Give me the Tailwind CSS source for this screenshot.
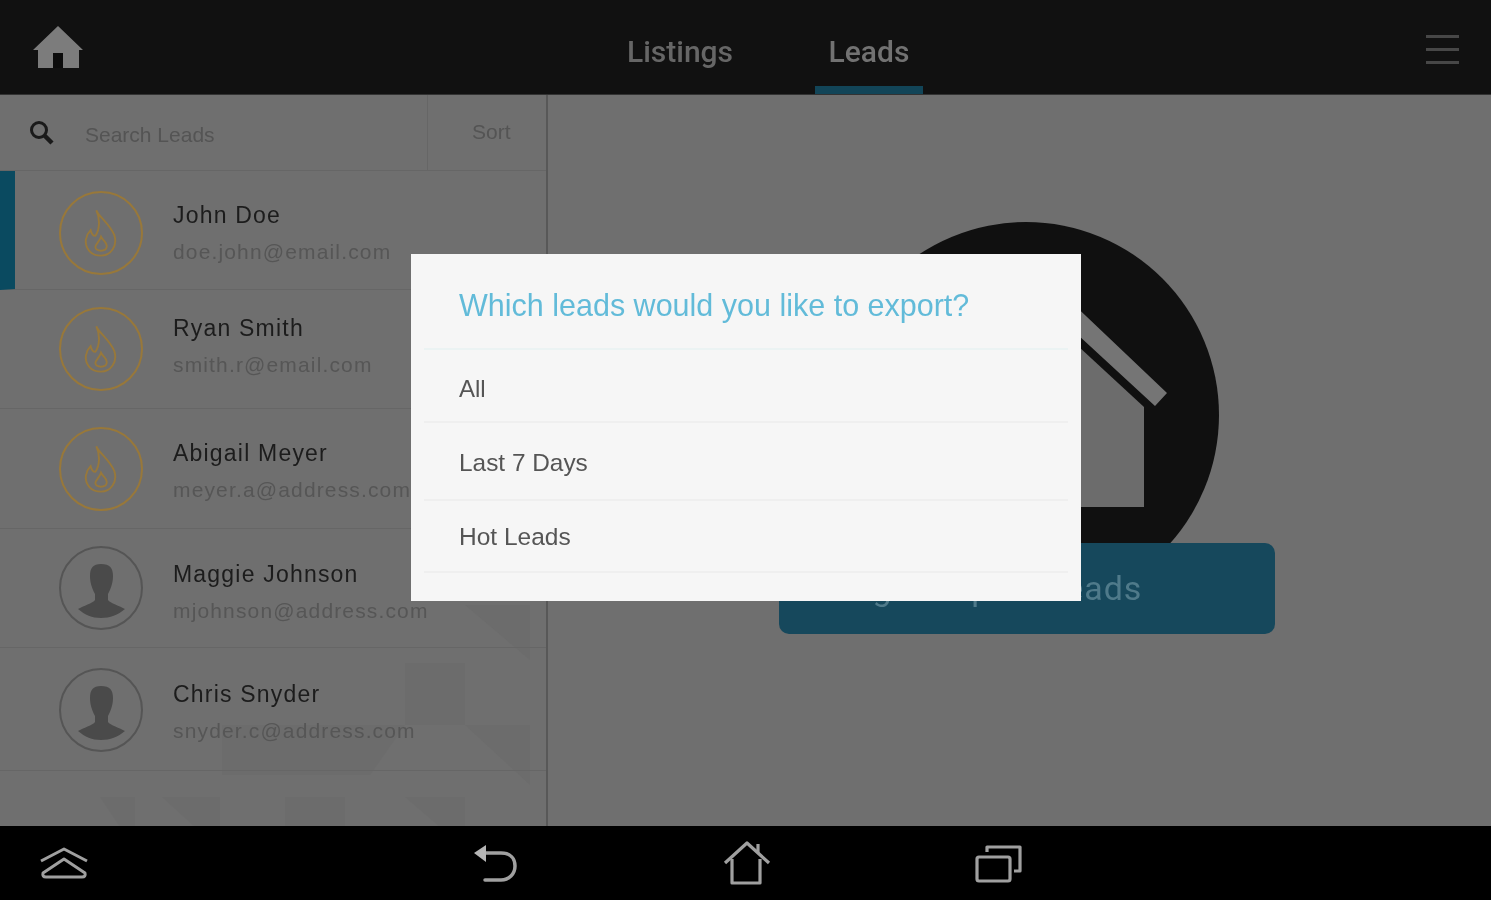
<!DOCTYPE html>
<html lang="en">
<head>
    <meta charset="UTF-8">
    <meta name="viewport" content="width=device-width, initial-scale=1.0">
    <title>Leads</title>
    <script src="https://cdn.jsdelivr.net/npm/@tailwindcss/browser@4"></script>
</head>
<body class="bg-black overflow-hidden">

<div class="relative w-[1491px] h-[900px] flex flex-col overflow-hidden font-['Liberation_Sans',Arial,sans-serif] blur-[0.6px]">

    <!-- Top bar -->
    <header class="h-[95px] shrink-0 flex bg-[#111111] border-b border-[#333333]">
        <div class="w-[627px] shrink-0 pl-[33px] pt-[25px]">
            <svg width="50" height="44" viewBox="0 0 50 44">
                <path d="M25 1 L50 25 H46 V43 H5 V25 H0 Z" fill="#7c7c7c"/>
                <rect x="20" y="28" width="10" height="15" fill="#0c0c0c"/>
            </svg>
        </div>
        <nav class="flex gap-[81px] -ml-px">
            <div class="w-[108px] flex justify-center pt-[36px] text-[30px] leading-[32px] font-['Roboto',sans-serif] font-medium text-[#666666]">Listings</div>
            <div class="w-[108px] flex justify-center pt-[36px] text-[30px] leading-[32px] font-['Roboto',sans-serif] font-medium text-[#727272] border-b-[8px] border-[#124558]">Leads</div>
        </nav>
        <div class="ml-auto mr-[32px] mt-[35px] w-[33px] h-[29px] flex flex-col justify-between">
            <div class="h-[3px] bg-[#474747]"></div>
            <div class="h-[3px] bg-[#474747]"></div>
            <div class="h-[3px] bg-[#474747]"></div>
        </div>
    </header>

    <!-- Main area -->
    <main class="flex-1 flex bg-[#6f6f6f] min-h-0">

        <!-- Lead list -->
        <aside class="relative w-[548px] shrink-0 border-r-2 border-[#585858] overflow-hidden">
            <!-- faint background pattern -->
            <svg class="absolute left-0 top-[440px]" width="546" height="292" viewBox="0 0 546 292">
                <g fill="#6c6c6c">
                    <rect x="405" y="128" width="60" height="62"/>
                    <path d="M465 70 L530 125 V70 Z"/>
                    <rect x="222" y="190" width="120" height="50"/>
                    <path d="M342 190 H405 L370 240 H342 Z"/>
                    <path d="M465 190 H530 V250 Z"/>
                    <path d="M100 262 H135 V292 H120 Z"/>
                    <path d="M162 262 H220 V292 H195 Z"/>
                    <rect x="285" y="262" width="60" height="30"/>
                    <path d="M405 262 H465 V292 H440 Z"/>
                </g>
            </svg>

            <div class="relative h-[76px] flex border-b border-[#666666]">
                <div class="w-[428px] flex border-r border-[#666666]">
                    <svg class="ml-[29px] mt-[25px]" width="26" height="26" viewBox="0 0 26 26" fill="none" stroke="#1a1a1a">
                        <circle cx="10" cy="10" r="7.5" stroke-width="3"/>
                        <path d="M15.5 15.5 L23 23" stroke-width="4.5"/>
                    </svg>
                    <span class="ml-[30px] mt-[28px] text-[21px] leading-[24px] text-[#545454]">Search Leads</span>
                </div>
                <span class="ml-[44px] mt-[25px] text-[21px] leading-[24px] text-[#545454]">Sort</span>
            </div>

            <!-- Row 1 (selected) -->
            <div class="relative h-[119px] flex items-center pl-[44px] border-b border-[#666666] border-l-[15px] border-l-[#0a4a60]">
                <div class="mt-[6px] w-[84px] h-[84px] shrink-0 rounded-full border-2 border-[#98783a] flex items-center justify-center">
                    <svg width="34" height="50" viewBox="0 0 36 52" fill="none" stroke="#98783a" stroke-width="2">
                        <path d="M13 2 C15 8 27 16 32 28 C36 40 28 50 18 50 C7 50 1 42 2 33 C3 28 5 25 7 23 C8 27 10 29 12 29 C17 22 17 10 13 2 Z"/>
                        <path d="M18 30 C20 34 25 36 24 41 C23 46 13 46 12 41 C12 38 16 36 18 30 Z"/>
                    </svg>
                </div>
                <div class="ml-[30px] mt-[6px]">
                    <div class="text-[23px] leading-[28px] tracking-[1.2px] text-[#1c1c1c]">John Doe</div>
                    <div class="mt-[9px] text-[21px] leading-[28px] tracking-[1.15px] text-[#565656]">doe.john@email.com</div>
                </div>
            </div>

            <!-- Row 2 -->
            <div class="relative h-[119px] flex items-center pl-[59px] border-b border-[#666666]">
                <div class="w-[84px] h-[84px] shrink-0 rounded-full border-2 border-[#98783a] flex items-center justify-center">
                    <svg width="34" height="50" viewBox="0 0 36 52" fill="none" stroke="#98783a" stroke-width="2">
                        <path d="M13 2 C15 8 27 16 32 28 C36 40 28 50 18 50 C7 50 1 42 2 33 C3 28 5 25 7 23 C8 27 10 29 12 29 C17 22 17 10 13 2 Z"/>
                        <path d="M18 30 C20 34 25 36 24 41 C23 46 13 46 12 41 C12 38 16 36 18 30 Z"/>
                    </svg>
                </div>
                <div class="ml-[30px] -mt-[6px]">
                    <div class="text-[23px] leading-[28px] tracking-[1.2px] text-[#1c1c1c]">Ryan Smith</div>
                    <div class="mt-[9px] text-[21px] leading-[28px] tracking-[1.15px] text-[#565656]">smith.r@email.com</div>
                </div>
            </div>

            <!-- Row 3 -->
            <div class="relative h-[120px] flex items-center pl-[59px] border-b border-[#666666]">
                <div class="w-[84px] h-[84px] shrink-0 rounded-full border-2 border-[#98783a] flex items-center justify-center">
                    <svg width="34" height="50" viewBox="0 0 36 52" fill="none" stroke="#98783a" stroke-width="2">
                        <path d="M13 2 C15 8 27 16 32 28 C36 40 28 50 18 50 C7 50 1 42 2 33 C3 28 5 25 7 23 C8 27 10 29 12 29 C17 22 17 10 13 2 Z"/>
                        <path d="M18 30 C20 34 25 36 24 41 C23 46 13 46 12 41 C12 38 16 36 18 30 Z"/>
                    </svg>
                </div>
                <div class="ml-[30px] mt-[6px]">
                    <div class="text-[23px] leading-[28px] tracking-[1.2px] text-[#1c1c1c]">Abigail Meyer</div>
                    <div class="mt-[9px] text-[21px] leading-[28px] tracking-[1.15px] text-[#565656]">meyer.a@address.com</div>
                </div>
            </div>

            <!-- Row 4 -->
            <div class="relative h-[119px] flex items-center pl-[59px] border-b border-[#666666]">
                <div class="w-[84px] h-[84px] shrink-0 rounded-full border-2 border-[#555555] flex items-center justify-center">
                    <svg class="mt-[6px]" width="47" height="54" viewBox="0 0 47 54" fill="#4a4a4a">
                        <path d="M23 0 C32 0 35 4 35 12 C35 20 32 26 30 30 L30 36 C32 39 42 42 47 45 C40 51 32 54 23 54 C14 54 7 51 0 45 C5 42 15 39 17 36 L17 30 C15 26 12 20 12 12 C12 4 15 0 23 0 Z"/>
                    </svg>
                </div>
                <div class="ml-[30px] mt-[9px]">
                    <div class="text-[23px] leading-[28px] tracking-[1.2px] text-[#1c1c1c]">Maggie Johnson</div>
                    <div class="mt-[9px] text-[21px] leading-[28px] tracking-[1.15px] text-[#565656]">mjohnson@address.com</div>
                </div>
            </div>

            <!-- Row 5 -->
            <div class="relative h-[123px] flex items-center pl-[59px] border-b border-[#666666]">
                <div class="mt-[2px] w-[84px] h-[84px] shrink-0 rounded-full border-2 border-[#555555] flex items-center justify-center">
                    <svg class="mt-[6px]" width="47" height="54" viewBox="0 0 47 54" fill="#4a4a4a">
                        <path d="M23 0 C32 0 35 4 35 12 C35 20 32 26 30 30 L30 36 C32 39 42 42 47 45 C40 51 32 54 23 54 C14 54 7 51 0 45 C5 42 15 39 17 36 L17 30 C15 26 12 20 12 12 C12 4 15 0 23 0 Z"/>
                    </svg>
                </div>
                <div class="ml-[30px] mt-[7px]">
                    <div class="text-[23px] leading-[28px] tracking-[1.2px] text-[#1c1c1c]">Chris Snyder</div>
                    <div class="mt-[9px] text-[21px] leading-[28px] tracking-[1.15px] text-[#565656]">snyder.c@address.com</div>
                </div>
            </div>
        </aside>

        <!-- Empty state -->
        <section class="flex-1 flex flex-col pl-[231px] pt-[127px]">
            <svg class="ml-[54px] w-[386px] h-[386px] shrink-0" viewBox="0 0 386 386">
                <circle cx="193" cy="193" r="193" fill="#101010"/>
                <path d="M193 76 L311 185 V285 H75 V185 Z" fill="#6c6c6c"/>
                <path d="M193 37 L334 171 L322 184 L193 65 L64 184 L52 171 Z" fill="#757575"/>
            </svg>
            <button class="relative -mt-[65px] w-[496px] h-[91px] rounded-[10px] bg-[#16485c] text-left pl-[54px] text-[34px] tracking-[0.9px] font-['Roboto',sans-serif] text-[#4f7a8a]">Log &amp; Export Leads</button>
        </section>
    </main>

    <!-- System bar -->
    <footer class="h-[74px] shrink-0 flex bg-black">
        <svg class="ml-[40px] mt-[21px]" width="48" height="32" viewBox="0 0 48 32" fill="none" stroke="#a0a0a0" stroke-width="3" stroke-linejoin="round">
            <path d="M1 14 L24 2 L47 14"/>
            <path d="M3 26 L24 12 L45 26 Q46 30 42 30 H6 Q2 30 3 26 Z"/>
        </svg>
        <svg class="ml-[385px] mt-[18px]" width="46" height="40" viewBox="0 0 46 40" fill="none" stroke="#a0a0a0" stroke-width="3.5" stroke-linecap="round">
            <path d="M8 9 H28 C38 9 42 15 42 22 C42 30 36 36 28 36 H12"/>
            <path d="M13 1 L1 9 L13 18 Z" fill="#b5b5b5" stroke="none"/>
        </svg>
        <svg class="ml-[204px] mt-[15px]" width="48" height="45" viewBox="0 0 48 45" fill="none" stroke="#a0a0a0" stroke-width="3.2" stroke-linejoin="round">
            <path d="M2 22 L24 2 L46 22"/>
            <path d="M35 12 V3"/>
            <path d="M9 18 V42 H37 V18"/>
        </svg>
        <svg class="ml-[204px] mt-[18px]" width="48" height="40" viewBox="0 0 48 40" fill="none" stroke="#a0a0a0" stroke-width="3.2" stroke-linejoin="round">
            <rect x="2" y="13" width="33" height="24" rx="2"/>
            <path d="M12 8 V3 H45 V27 H39"/>
        </svg>
    </footer>

    <!-- Export dialog -->
    <div class="absolute left-[411px] top-[254px] w-[670px] h-[347px] bg-[#f6f6f6] px-[13px]">
        <div class="h-[96px] border-b-2 border-[#ebf3f3] pl-[35px] pt-[33px] text-[30.5px] leading-[36px] text-[#62bbd9]">Which leads would you like to export?</div>
        <div class="h-[73px] border-b-2 border-[#efefef] pl-[35px] pt-[23px] text-[24px] leading-[32px] text-[#555555]">All</div>
        <div class="h-[78px] border-b-2 border-[#efefef] pl-[35px] pt-[24px] text-[24.4px] leading-[32px] text-[#555555]">Last 7 Days</div>
        <div class="h-[72px] border-b-2 border-[#efefef] pl-[35px] pt-[20px] text-[24.5px] leading-[32px] text-[#555555]">Hot Leads</div>
    </div>
</div>

</body>
</html>
